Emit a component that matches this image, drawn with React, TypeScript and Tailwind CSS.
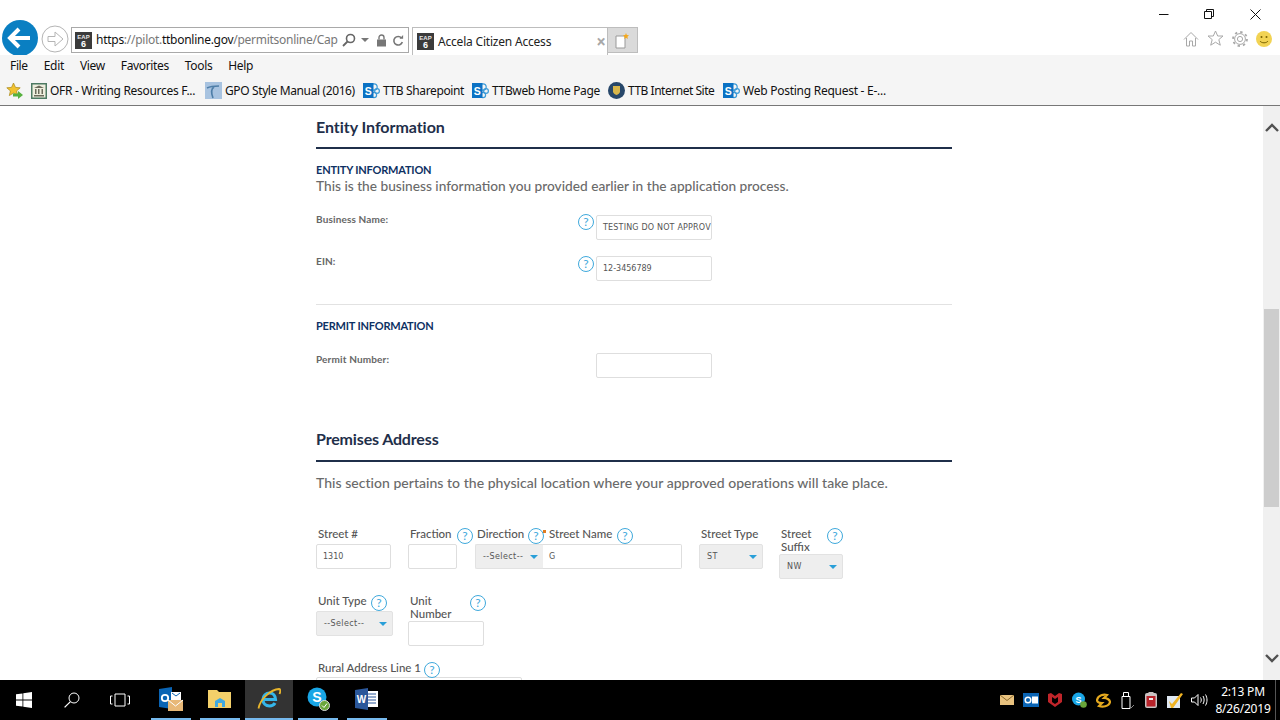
import React from "react";

const chrome = { fontFamily: '"Noto Sans", "Open Sans", sans-serif' };
const form = { fontFamily: 'Lato, "Open Sans", sans-serif' };

function Eap({ size = 17 }: { size?: number }) {
  return (
    <svg width={size} height={size} viewBox="0 0 17 17" className="shrink-0">
      <rect width="17" height="17" fill="#3b3b3b" />
      <text x="8.5" y="6.5" fontSize="6" textAnchor="middle" fill="#e8e8e8" fontFamily="Liberation Sans, sans-serif" fontWeight="700">EAP</text>
      <text x="8.5" y="15" fontSize="9" textAnchor="middle" fill="#fff" fontFamily="Liberation Sans, sans-serif" fontWeight="700">6</text>
    </svg>
  );
}

function Sp() {
  return (
    <svg width="17" height="17" viewBox="0 0 17 17" className="shrink-0">
      <circle cx="11" cy="5" r="3.2" fill="none" stroke="#3d9bd8" strokeWidth="1.2" />
      <circle cx="14" cy="9" r="2.4" fill="none" stroke="#3d9bd8" strokeWidth="1.2" />
      <circle cx="11" cy="13" r="2.6" fill="none" stroke="#3d9bd8" strokeWidth="1.2" />
      <rect x="0" y="1" width="10.5" height="15" fill="#0b72c4" />
      <text x="5.2" y="12.5" fontSize="10.5" textAnchor="middle" fill="#fff" fontFamily="Liberation Sans, sans-serif" fontWeight="700">S</text>
    </svg>
  );
}

function Fav({ icon, label, w, t = "tracking-[-0.3px]" }: { icon: React.ReactNode; label: string; w: string; t?: string }) {
  return (
    <div className={`flex items-center gap-[3px] ${w}`}>
      {icon}
      <span className={`whitespace-nowrap text-[12px] leading-none text-[#111] ${t}`}>{label}</span>
    </div>
  );
}

function Help({ className = "" }: { className?: string }) {
  return (
    <span className={`flex h-[16px] w-[16px] shrink-0 items-center justify-center rounded-full border border-[#3fa9dc] bg-white text-[12px] leading-none text-[#3fa9dc] ${className}`}>?</span>
  );
}

function Field({ value = "", className = "" }: { value?: string; className?: string }) {
  return (
    <div
      className={`flex h-[25px] items-center overflow-hidden whitespace-nowrap rounded-[2px] border border-[#dedede] bg-white pl-[6px] text-[8px] text-[#555] ${className}`}
      style={{ fontFamily: '"DejaVu Sans", sans-serif' }}
    >
      {value}
    </div>
  );
}

function Select({ value, className = "" }: { value: string; className?: string }) {
  return (
    <div
      className={`flex h-[25px] items-center justify-between rounded-[2px] border border-[#e2e2e2] bg-[#eeeeee] pl-[7px] pr-[5px] text-[8px] text-[#555] ${className}`}
      style={{ fontFamily: '"DejaVu Sans", sans-serif' }}
    >
      <span className="tracking-[0.4px]">{value}</span>
      <span className="h-0 w-0 border-x-[4px] border-t-[4px] border-x-transparent border-t-[#2a9fd8]" />
    </div>
  );
}

function Label({ children, className = "" }: { children: React.ReactNode; className?: string }) {
  return <div className={`shrink-0 text-[11.5px] leading-[13px] text-[#555] font-medium ${className}`}>{children}</div>;
}

function FormRow({ label, value, help, mb, fieldClass = "" }: { label: string; value: string; help?: boolean; mb: string; fieldClass?: string }) {
  return (
    <div className={`flex ${mb}`}>
      <div className="w-[262px] text-[10px] font-bold leading-[12px] tracking-[0.15px] text-[#666]">{label}</div>
      <div className="flex w-[18px] shrink-0 pt-[1px]">{help && <Help />}</div>
      <Field value={value} className={`w-[116px] ${fieldClass}`} />
    </div>
  );
}

function Chrome() {
  return (
    <header className="h-[106px] shrink-0 border-b border-[#777] bg-white" style={chrome}>
      <div className="flex h-[55px] items-start overflow-hidden">
        <svg width="38" height="37" viewBox="0 0 38 37" className="ml-[1px] mt-[19px] shrink-0">
          <circle cx="19" cy="19" r="18" fill="#0a7fc2" />
          <path d="M10 19h19M18 10l-9 9 9 9" fill="none" stroke="#fff" strokeWidth="4" />
        </svg>
        <svg width="28" height="28" viewBox="0 0 28 28" className="ml-[2px] mt-[25px] shrink-0">
          <circle cx="14" cy="14" r="13" fill="#fff" stroke="#b5b5b5" />
          <path d="M7 11.5h7v-4.5l8 7-8 7v-4.5h-7z" fill="none" stroke="#b5b5b5" />
        </svg>
        <div className="ml-[2px] mt-[27px] flex h-[26px] w-[338px] shrink-0 items-center border border-[#a9a9a9] bg-white pl-[3px]">
          <Eap />
          <span className="ml-[4px] w-[242px] shrink-0 whitespace-nowrap text-[12px] tracking-[-0.27px] text-[#777]">
            <span className="text-[#111]">https</span>://pilot.<span className="text-[#111]">ttbonline.gov</span>/permitsonline/Cap
          </span>
          <svg width="14" height="14" viewBox="0 0 14 14" className="ml-[4px] shrink-0">
            <circle cx="8.5" cy="5.5" r="4" fill="none" stroke="#666" strokeWidth="1.6" />
            <path d="M5.5 8.5L1 13" stroke="#666" strokeWidth="1.8" />
          </svg>
          <span className="ml-[5px] h-0 w-0 border-x-[4px] border-t-[4px] border-x-transparent border-t-[#777]" />
          <svg width="11" height="13" viewBox="0 0 11 13" className="ml-[7px] shrink-0">
            <rect x="1" y="5.5" width="9" height="7" fill="#777" />
            <path d="M3 5.5V3.5a2.5 2.5 0 015 0v2" fill="none" stroke="#777" strokeWidth="1.4" />
          </svg>
          <svg width="12" height="13" viewBox="0 0 12 13" className="ml-[5px] shrink-0">
            <path d="M9.5 4a4.3 4.3 0 10.8 4" fill="none" stroke="#777" strokeWidth="1.6" />
            <path d="M7.5 4.8h3.6V1z" fill="#777" />
          </svg>
        </div>
        <div className="ml-[3px] mt-[27px] flex h-[28px] w-[196px] shrink-0 items-center border border-b-0 border-[#bdbdbd] bg-white pl-[4px]">
          <Eap />
          <span className="ml-[4px] whitespace-nowrap text-[12px] tracking-[-0.2px] text-[#222]">Accela Citizen Access</span>
          <span className="ml-auto mr-[1px] text-[17px] font-bold leading-none text-[#a8a8a8]">×</span>
        </div>
        <div className="mt-[27px] flex h-[26px] w-[30px] shrink-0 items-center justify-center border border-l-0 border-[#bdbdbd] bg-[#dadada]">
          <svg width="15" height="17" viewBox="0 0 15 17">
            <path d="M1 4h9v12H1z" fill="#fff" stroke="#999" />
            <path d="M11 1l.8 2 2.2.3-1.6 1.4.5 2.2-1.9-1.1-1.9 1.1.5-2.2-1.6-1.4 2.2-.3z" fill="#f5a81a" />
          </svg>
        </div>
        <div className="ml-auto flex flex-col items-end">
          <div className="flex h-[28px] items-center">
            <svg width="10" height="10" viewBox="0 0 10 10" className="mr-[35px]"><path d="M0 5.5h9.5" stroke="#111" /></svg>
            <svg width="10" height="10" viewBox="0 0 10 10" className="mr-[36px]">
              <path d="M.5 2.5h7v7h-7zM2.5 2.5v-2h7v7h-2" fill="none" stroke="#111" />
            </svg>
            <svg width="11" height="11" viewBox="0 0 11 11" className="mr-[19px]"><path d="M.5.5l10 10M10.5.5l-10 10" stroke="#111" /></svg>
          </div>
          <div className="mt-[2px] flex items-center gap-[8px] pr-[8px]">
            <svg width="16" height="16" viewBox="0 0 16 16">
              <path d="M1 8.5L8 1.5l7 7M3.5 7v8h3v-5h3v5h3V7" fill="none" stroke="#a8a8a8" />
            </svg>
            <svg width="17" height="17" viewBox="0 0 17 17">
              <path d="M8.5 1l2.2 5h5.3l-4.2 3.6 1.5 5.6-4.8-3-4.8 3 1.500-5.600L1 6h5.300z" fill="none" stroke="#a8a8a8" />
            </svg>
            <svg width="16" height="16" viewBox="0 0 16 16">
              <circle cx="8" cy="8" r="2.6" fill="none" stroke="#a8a8a8" />
              <circle cx="8" cy="8" r="5.4" fill="none" stroke="#a8a8a8" />
              <circle cx="8" cy="8" r="7" fill="none" stroke="#a8a8a8" strokeWidth="1.8" strokeDasharray="2.4 3.1" />
            </svg>
            <svg width="16" height="16" viewBox="0 0 16 16">
              <circle cx="8" cy="8" r="8" fill="#f2d353" />
              <circle cx="5.500" cy="6" r="1" fill="#7a6200" />
              <circle cx="10.500" cy="6" r="1" fill="#7a6200" />
              <path d="M4 10c1.500 2.400 6.500 2.400 8 0" fill="none" stroke="#7a6200" />
            </svg>
          </div>
        </div>
      </div>
      <div className="flex h-[50px] flex-col bg-[#f5f5f5]">
        <nav className="flex h-[22px] items-center gap-[16px] pl-[10px] text-[12px] tracking-[-0.35px] text-[#111]">
          <span>File</span>
          <span>Edit</span>
          <span>View</span>
          <span>Favorites</span>
          <span>Tools</span>
          <span>Help</span>
        </nav>
        <div className="flex h-[27px] items-center pl-[6px]">
          <svg width="17" height="17" viewBox="0 0 17 17" className="mr-[8px] shrink-0">
            <path d="M7.500 1l2 4.400 4.700.4-3.600 3.100 1.100 4.700-4.200-2.500-4.200 2.500 1.100-4.700L.8 5.800l4.700-.4z" fill="#f2c230" stroke="#a88716" strokeWidth=".7" />
            <path d="M7 11.500h5V9l5 4-5 4v-2.500H7z" fill="#56b13e" />
          </svg>
          <Fav w="w-[174px]" label="OFR - Writing Resources F..." icon={
            <svg width="16" height="16" viewBox="0 0 16 16" className="shrink-0">
              <rect width="16" height="16" fill="#4d7a63" />
              <rect x="1.500" y="1.500" width="13" height="13" fill="#eeeede" />
              <path d="M3 5l5-2.500L13 5zM4 6h1.500v5H4zM7 6h1.500v5H7zM10.500 6H12v5h-1.500zM3 12h10v1.500H3z" fill="#6a6a5a" />
            </svg>
          } />
          <Fav w="w-[158px]" label="GPO Style Manual (2016)" t="tracking-[-0.38px]" icon={
            <svg width="17" height="17" viewBox="0 0 17 17" className="shrink-0">
              <rect width="17" height="17" fill="#a8c3e0" />
              <path d="M2 6c4-2 7-2 12-2M9 5c-3 2-3 6-1 11" fill="none" stroke="#4e7ea8" strokeWidth="1.600" />
            </svg>
          } />
          <Fav w="w-[109px]" label="TTB Sharepoint" t="tracking-[-0.37px]" icon={<Sp />} />
          <Fav w="w-[136px]" label="TTBweb Home Page" t="tracking-[-0.35px]" icon={<Sp />} />
          <Fav w="w-[115px]" label="TTB Internet Site" t="tracking-[-0.48px]" icon={
            <svg width="17" height="17" viewBox="0 0 17 17" className="shrink-0">
              <circle cx="8.500" cy="8.500" r="8.500" fill="#27476a" />
              <path d="M5 4h7v5.500c0 2-2 3-3.500 3.500C7 12.500 5 11.500 5 9.500z" fill="#d8b64a" />
            </svg>
          } />
          <Fav w="w-[170px]" label="Web Posting Request - E-..." t="tracking-[-0.26px]" icon={<Sp />} />
        </div>
      </div>
    </header>
  );
}

function Page() {
  return (
    <main className="min-w-0 flex-1 overflow-hidden bg-white" style={form}>
      <div className="ml-[316px] w-[636px] pt-[11px]">
        <h2 className="text-[16px] font-bold leading-[20px] tracking-[-0.05px] text-[#1f2f4a]">Entity Information</h2>
        <div className="mt-[10px] h-[2px] bg-[#1f2f4a]" />
        <div className="mt-[14px] text-[11px] font-bold leading-[13px] tracking-[-0.2px] text-[#0e3163]">ENTITY INFORMATION</div>
        <p className="mt-[1px] text-[13.7px] font-medium leading-[18px] text-[#6a6a6a]">This is the business information you provided earlier in the application process.</p>
        <div className="mt-[18px]">
          <FormRow label="Business Name:" value="TESTING DO NOT APPROV" fieldClass="mt-[2px] tracking-[0.18px]" help mb="mb-[15px]" />
          <FormRow label="EIN:" value="12-3456789" fieldClass="mt-[1px]" help mb="mb-0" />
        </div>
        <div className="mt-[23px] h-px bg-[#e2e2e2]" />
        <div className="mt-[14px] text-[11px] font-bold leading-[13px] tracking-[-0.2px] text-[#0e3163]">PERMIT INFORMATION</div>
        <div className="mt-[21px]">
          <FormRow label="Permit Number:" value="" mb="mb-0" />
        </div>
        <h2 className="mt-[51px] text-[16px] font-bold leading-[20px] tracking-[-0.15px] text-[#1f2f4a]">Premises Address</h2>
        <div className="mt-[11px] h-[2px] bg-[#1f2f4a]" />
        <p className="mt-[12px] text-[14px] font-medium leading-[18px] tracking-[0.03px] text-[#6a6a6a]">This section pertains to the physical location where your approved operations will take place.</p>

        <div className="mt-[35px] flex items-start">
          <div className="w-[92px]">
            <Label className="ml-[2px] h-[17px]">Street #</Label>
            <Field value="1310" className="w-[75px]" />
          </div>
          <div className="w-[67px]">
            <div className="flex h-[17px] items-start">
              <Label className="ml-[2px] w-[47px]">Fraction</Label>
              <Help className="mt-[1px]" />
            </div>
            <Field className="w-[49px]" />
          </div>
          <div className="w-[68px]">
            <div className="flex h-[17px] items-start">
              <Label className="ml-[2px] w-[51px] whitespace-nowrap">Direction</Label>
              <Help className="mt-[1px] mr-[-3px]" />
            </div>
            <Select value="--Select--" className="w-[68px] rounded-r-none border-r-0" />
          </div>
          <div className="w-[156px]">
            <div className="flex h-[17px] items-start">
              <span className="mt-[3px] h-[3px] w-[3px] shrink-0 bg-[#e07b20]" />
              <Label className="ml-[3px] w-[68px] whitespace-nowrap">Street Name</Label>
              <Help className="mt-[1px]" />
            </div>
            <Field value="G" className="w-[139px] rounded-l-none border-l-0 pl-[4px]" />
          </div>
          <div className="w-[80px]">
            <Label className="ml-[2px] h-[17px] whitespace-nowrap">Street Type</Label>
            <Select value="ST" className="w-[64px]" />
          </div>
          <div className="w-[64px]">
            <div className="flex h-[27px] items-start">
              <Label className="ml-[2px] w-[44px]">Street Suffix</Label>
              <Help className="mt-[1px] ml-[2px]" />
            </div>
            <Select value="NW" className="w-[64px]" />
          </div>
        </div>

        <div className="mt-[15px] flex items-start">
          <div className="w-[92px]">
            <div className="flex h-[17px] items-start">
              <Label className="ml-[2px] w-[53px] whitespace-nowrap">Unit Type</Label>
              <Help className="mt-[1px]" />
            </div>
            <Select value="--Select--" className="w-[77px]" />
          </div>
          <div className="w-[76px]">
            <div className="flex h-[27px] items-start">
              <Label className="ml-[2px] w-[60px]">Unit Number</Label>
              <Help className="mt-[1px]" />
            </div>
            <Field className="w-[76px]" />
          </div>
        </div>

        <div className="mt-[15px] flex h-[16px] items-start">
          <Label className="ml-[2px] w-[106px] whitespace-nowrap">Rural Address Line 1</Label>
          <Help className="mt-[1px]" />
        </div>
        <Field className="w-[206px]" />
      </div>
    </main>
  );
}

function Scrollbar() {
  return (
    <aside className="flex w-[17px] shrink-0 flex-col items-center bg-[#f0f0f0]">
      <svg width="14" height="9" viewBox="0 0 14 9" className="mt-[17px] shrink-0">
        <path d="M1 8l6-6 6 6" fill="none" stroke="#505050" strokeWidth="2.4" />
      </svg>
      <div className="mt-[177px] h-[198px] w-[15px] shrink-0 bg-[#cdcdcd]" />
      <svg width="14" height="9" viewBox="0 0 14 9" className="mt-[147px] shrink-0">
        <path d="M1 1l6 6 6-6" fill="none" stroke="#505050" strokeWidth="2.4" />
      </svg>
    </aside>
  );
}

function Task({ children, active }: { children: React.ReactNode; active?: boolean }) {
  return (
    <div className="flex h-full w-[48px] shrink-0 flex-col items-center">
      <div className={`flex h-[38px] w-full items-center justify-center ${active ? "bg-[#333]" : ""}`}>{children}</div>
      <div className={`h-[2px] bg-[#76b9ed] ${active ? "w-[48px]" : "w-[40px]"}`} />
    </div>
  );
}

function Tray({ children }: { children: React.ReactNode }) {
  return <div className="flex w-[24px] shrink-0 items-center justify-center">{children}</div>;
}

function Taskbar() {
  return (
    <footer className="flex h-[40px] shrink-0 items-center bg-black text-white" style={{ fontFamily: '"Noto Sans", sans-serif' }}>
      <div className="flex h-[40px] w-[48px] items-center justify-center">
        <svg width="16" height="16" viewBox="0 0 16 16">
          <path d="M0 2.300l6.500-.9v6.200H0zM7.300 1.300L16 0v7.600H7.300zM0 8.400h6.500v6.200L0 13.700zM7.300 8.400H16V16l-8.700-1.300z" fill="#fff" />
        </svg>
      </div>
      <div className="flex h-[40px] w-[48px] items-center justify-center">
        <svg width="16" height="16" viewBox="0 0 16 16">
          <circle cx="10" cy="6" r="5" fill="none" stroke="#fff" />
          <path d="M6.400 9.600L.6 15.400" stroke="#fff" strokeWidth="1.300" />
        </svg>
      </div>
      <div className="flex h-[40px] w-[48px] items-center justify-center">
        <svg width="20" height="14" viewBox="0 0 20 14">
          <path d="M5 1h10v12H5z" fill="none" stroke="#fff" />
          <path d="M2.500 3H.5v8h2M17.500 3h2v8h-2" fill="none" stroke="#fff" />
        </svg>
      </div>
      <div className="ml-[3px] flex h-[40px] items-stretch gap-[1px]">
        <Task>
          <svg width="26" height="26" viewBox="0 0 26 26">
            <path d="M1 3l13-2v22L1 21z" fill="#0a64b4" />
            <rect x="13" y="6" width="10" height="8" fill="#fff" />
            <path d="M14 7l4 3 4-3" fill="none" stroke="#0a64b4" />
            <circle cx="7" cy="12" r="3.200" fill="none" stroke="#fff" strokeWidth="1.800" />
            <rect x="10" y="14" width="15" height="11" fill="#e8b877" />
            <path d="M10 14l7.500 6 7.500-6" fill="none" stroke="#fff" />
          </svg>
        </Task>
        <Task>
          <svg width="24" height="20" viewBox="0 0 24 20">
            <path d="M0 1h9l2 2h12v16H0z" fill="#f3d06a" />
            <path d="M7 18v-6l5-3 5 3v6z" fill="#3fa9e0" />
            <rect x="10" y="14" width="4" height="5" fill="#f3d06a" />
          </svg>
        </Task>
        <Task active>
          <svg width="24" height="24" viewBox="0 0 24 24">
            <path d="M6.500 12.500h12c0-4-2.600-6.500-6-6.500s-6.500 2.800-6.500 6.500 2.800 6.500 6.500 6.500c2.500 0 4.300-1 5.500-3" fill="none" stroke="#35b6ea" strokeWidth="3.200" />
            <path d="M1.500 21.500C3 12 14 2.500 22 2c1.500 0 1.800 2 .5 5" fill="none" stroke="#e8b52c" strokeWidth="1.800" />
          </svg>
        </Task>
        <Task>
          <svg width="24" height="24" viewBox="0 0 24 24">
            <circle cx="11" cy="10" r="9.500" fill="#19a6e6" />
            <text x="11" y="15" textAnchor="middle" fontSize="14" fontWeight="700" fill="#fff" fontFamily="Liberation Sans, sans-serif">S</text>
            <circle cx="18.500" cy="18.500" r="5" fill="#6aa53a" stroke="#ddd" />
            <path d="M16 18.500l2 2 3-4" fill="none" stroke="#fff" />
          </svg>
        </Task>
        <Task>
          <svg width="24" height="22" viewBox="0 0 24 22">
            <rect x="10" y="3" width="13" height="16" fill="#fff" />
            <path d="M13 6h8M13 9h8M13 12h8M13 15h8" stroke="#2b579a" />
            <path d="M0 2l13-2v22L0 20z" fill="#2b579a" />
            <text x="6.500" y="15" textAnchor="middle" fontSize="10" fontWeight="700" fill="#fff" fontFamily="Liberation Sans, sans-serif">W</text>
          </svg>
        </Task>
      </div>
      <div className="ml-auto flex items-center">
        <Tray><svg width="14" height="10" viewBox="0 0 14 10"><rect width="14" height="10" fill="#e8c27f" /><path d="M0 0l7 5.500L14 0" fill="none" stroke="#8a6a30" /></svg></Tray>
        <Tray>
          <svg width="16" height="14" viewBox="0 0 16 14">
            <rect width="16" height="14" fill="#0a64b4" />
            <circle cx="5" cy="7" r="2.800" fill="none" stroke="#fff" strokeWidth="1.500" />
            <rect x="9" y="3.500" width="6" height="7" fill="#fff" />
          </svg>
        </Tray>
        <Tray><svg width="14" height="14" viewBox="0 0 14 14"><path d="M0 1l3-1 4 3 4-3 3 1v8l-7 5-7-5z" fill="#c0252a" /><path d="M4 4v5l3 2 3-2V4L7 6z" fill="#000" /></svg></Tray>
        <Tray>
          <svg width="16" height="16" viewBox="0 0 16 16">
            <circle cx="7.500" cy="7" r="6.500" fill="#19a6e6" />
            <text x="7.500" y="10.500" textAnchor="middle" fontSize="9" fontWeight="700" fill="#fff" fontFamily="Liberation Sans, sans-serif">S</text>
            <circle cx="12.500" cy="12.500" r="3.300" fill="#6aa53a" />
          </svg>
        </Tray>
        <Tray><svg width="15" height="15" viewBox="0 0 15 15"><path d="M1 7C2 2 8 1 11 2L8 5c3 0 6 2 6 4-1 5-8 5-11 4l3-3C3 10 1 9 1 7z" fill="none" stroke="#e5a91e" strokeWidth="2.200" /></svg></Tray>
        <Tray><svg width="13" height="17" viewBox="0 0 13 17"><path d="M2.500 .5h5v4h-5zM1 4.500h8V16.500H1z" fill="none" stroke="#fff" /><path d="M8 15l2 1 3-3" fill="none" stroke="#888" /></svg></Tray>
        <Tray><svg width="12" height="16" viewBox="0 0 12 16"><rect y="1" width="12" height="15" rx="2" fill="#c9c3c3" /><rect x="1.500" y="4" width="9" height="10.500" fill="#b8232a" /><rect x="3.500" y="0" width="5" height="2" fill="#c9c3c3" /><rect x="4" y="6" width="4" height="2" fill="#eee" /></svg></Tray>
        <Tray><svg width="16" height="15" viewBox="0 0 16 15"><rect y="3" width="13" height="12" fill="#dfe8f2" /><path d="M2 8l3 3L14 0l2 1L6 15H4z" fill="#f0b323" /></svg></Tray>
        <Tray>
          <svg width="17" height="14" viewBox="0 0 17 14">
            <path d="M.5 5h3L7 1.500v11L3.500 9h-3z" fill="none" stroke="#fff" />
            <path d="M9.500 4.500c1 1.500 1 3.500 0 5M12 3c1.500 2.500 1.500 5.500 0 8M14.500 1.500c2 3.500 2 7.500 0 11" fill="none" stroke="#fff" />
          </svg>
        </Tray>
      </div>
      <div className="ml-[6px] flex w-[52px] flex-col items-center text-[12px] leading-[17px] tracking-[-0.2px] text-white">
        <span>2:13 PM</span>
        <span className="whitespace-nowrap">8/26/2019</span>
      </div>
      <div className="ml-[6px] mr-[4px] h-[40px] w-px bg-[#555]" />
    </footer>
  );
}

export default function App() {
  return (
    <div className="flex h-[720px] w-[1280px] flex-col overflow-hidden bg-white">
      <Chrome />
      <div className="flex min-h-0 flex-1">
        <Page />
        <Scrollbar />
      </div>
      <Taskbar />
    </div>
  );
}
